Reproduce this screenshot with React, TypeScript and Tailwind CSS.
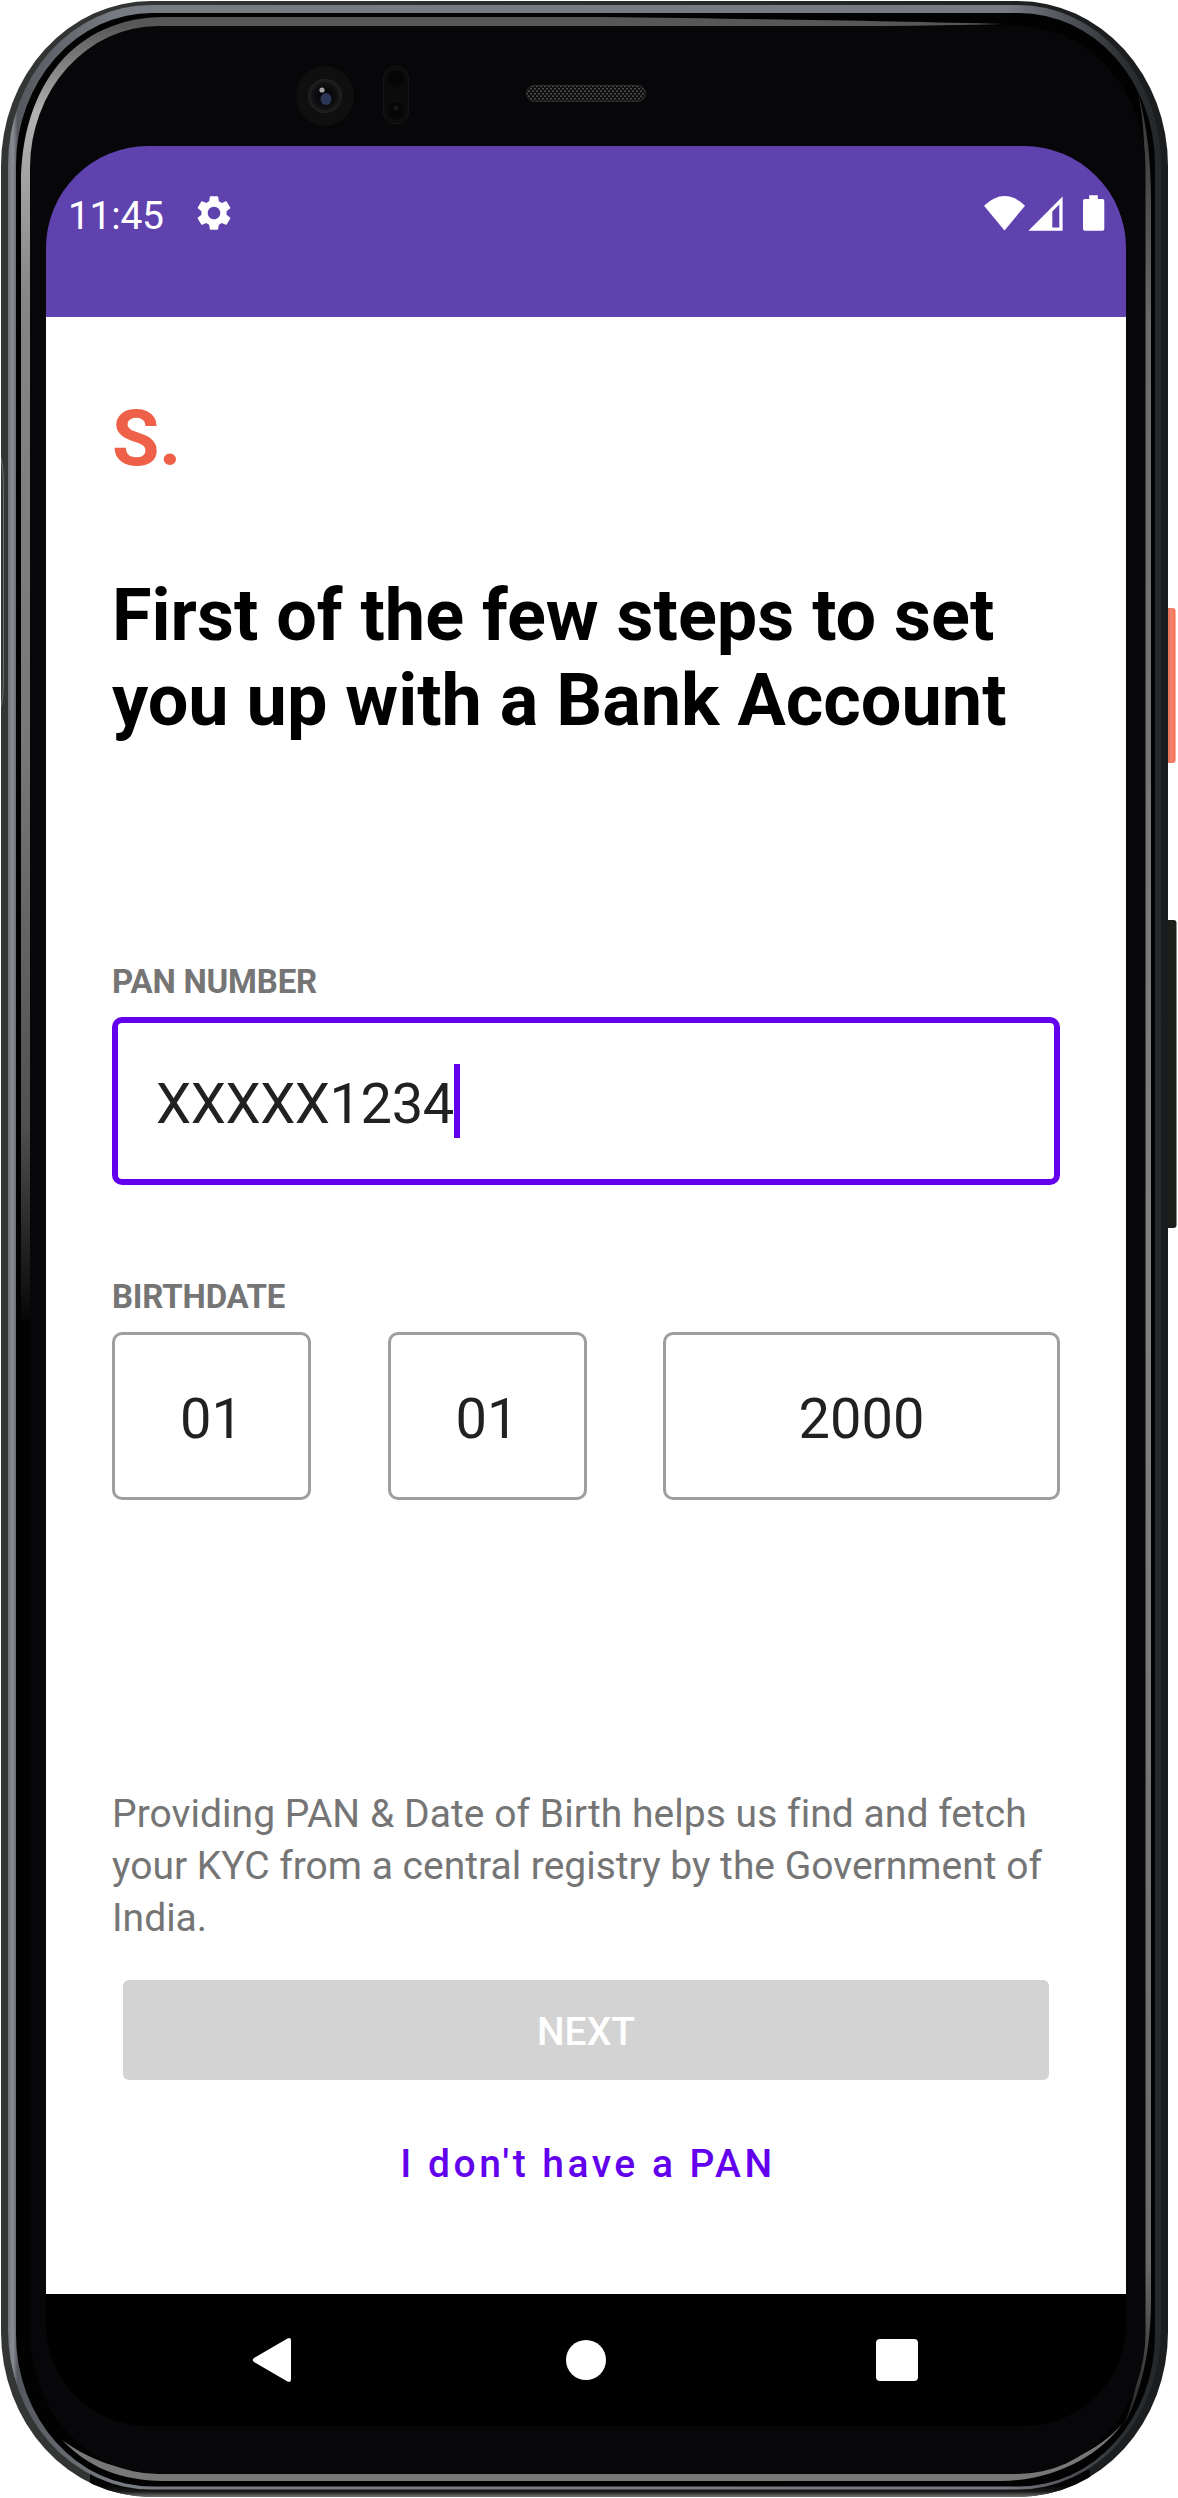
import React from "react";
import { MdSettings } from "react-icons/md";

function PhoneBody() {
  return (
    <svg className="absolute inset-0" width="1178" height="2498" viewBox="0 0 1178 2498" fill="none" aria-hidden="true">
      <defs>
        <clipPath id="bodyClip">
          <rect x="1" y="1" width="1167" height="2496" rx="150" ry="165" />
        </clipPath>
        <linearGradient id="shell" x1="0" y1="0" x2="1170" y2="0" gradientUnits="userSpaceOnUse">
          <stop offset="0" stopColor="#343636" />
          <stop offset="0.5" stopColor="#2b2d2d" />
          <stop offset="1" stopColor="#1b1c1e" />
        </linearGradient>
        <linearGradient id="shellBottom" x1="0" y1="2486" x2="0" y2="2497" gradientUnits="userSpaceOnUse">
          <stop offset="0" stopColor="#050505" />
          <stop offset="0.5" stopColor="#1a1a1a" />
          <stop offset="1" stopColor="#777777" />
        </linearGradient>
        <linearGradient id="silver" x1="0" y1="0" x2="1170" y2="0" gradientUnits="userSpaceOnUse">
          <stop offset="0" stopColor="#6d7177" />
          <stop offset="0.006" stopColor="#6d7177" />
          <stop offset="0.011" stopColor="#8a8d94" />
          <stop offset="0.015" stopColor="#55585e" />
          <stop offset="0.1" stopColor="#777b82" />
          <stop offset="0.86" stopColor="#777a82" />
          <stop offset="0.96" stopColor="#2c2f32" />
          <stop offset="1" stopColor="#222527" />
        </linearGradient>
        <linearGradient id="glint" x1="0" y1="0" x2="0" y2="2498" gradientUnits="userSpaceOnUse">
          <stop offset="0.01" stopColor="#575757" />
          <stop offset="0.045" stopColor="#b2b2b2" />
          <stop offset="0.12" stopColor="#858585" />
          <stop offset="0.3" stopColor="#777777" />
          <stop offset="0.45" stopColor="#505050" />
          <stop offset="0.53" stopColor="#050505" />
        </linearGradient>
        <linearGradient id="rightGlint" x1="0" y1="90" x2="0" y2="2450" gradientUnits="userSpaceOnUse">
          <stop offset="0" stopColor="#333333" />
          <stop offset="0.1" stopColor="#6a6a6a" />
          <stop offset="0.5" stopColor="#808080" />
          <stop offset="0.92" stopColor="#6a6a6a" />
          <stop offset="1" stopColor="#1a1a1a" />
        </linearGradient>
        <linearGradient id="power" x1="1166" y1="0" x2="1176" y2="0" gradientUnits="userSpaceOnUse">
          <stop offset="0" stopColor="#b04a35" />
          <stop offset="0.25" stopColor="#e8735a" />
          <stop offset="0.6" stopColor="#f08670" />
          <stop offset="0.9" stopColor="#ff6a4c" />
        </linearGradient>
        <radialGradient id="lens">
          <stop offset="0.3" stopColor="#06060a" />
          <stop offset="0.7" stopColor="#101012" />
          <stop offset="1" stopColor="#222222" />
        </radialGradient>
        <pattern id="mesh" width="4" height="5" patternUnits="userSpaceOnUse">
          <rect width="4" height="5" fill="#0c0c0c" />
          <circle cx="1" cy="1.2" r="1" fill="#505050" />
          <circle cx="3" cy="3.7" r="1" fill="#505050" />
        </pattern>
      </defs>

      <rect x="1164" y="608" width="11.5" height="155" rx="3" fill="url(#power)" />
      <rect x="1164" y="920" width="12.5" height="308" rx="3" fill="#1d1d1c" />

      <g clipPath="url(#bodyClip)">
        <rect x="1" y="1" width="1167" height="2496" fill="url(#shell)" />
        <rect x="90" y="2470" width="1000" height="27" fill="url(#shellBottom)" />
        <rect x="8" y="5" width="1153" height="2484.500" rx="143" ry="160" fill="url(#silver)" />
        <rect x="16" y="13" width="1139" height="2473.500" rx="136" ry="152" fill="#020203" />
        <path d="M1 458C3.500 470 3.500 480 3.500 500V660C3.500 690 3 700 1 706" stroke="#6d716f" />
      </g>

      <path d="M165 17H600C760 19 900 21 1005 24C900 26.500 800 27 700 27H165C80 32 36 90 36 185L30 1320H21V185C21 85 75 17 165 17Z" fill="url(#glint)" />
      <path d="M1138 92C1147 125 1151 160 1151 200V2300C1151 2370 1132 2410 1124 2425C1138 2390 1144 2350 1144 2300V200C1146 160 1144 120 1138 92Z" fill="url(#rightGlint)" />
      <path d="M62 2440C95 2474 130 2481 170 2481H1000C1055 2481 1100 2455 1122 2424C1095 2455 1050 2473 1000 2473.500H170C130 2473 95 2464 62 2440Z" fill="#777777" />

      <rect x="30" y="26" width="1115.500" height="2448" rx="128" ry="142" fill="#070608" />

      <ellipse cx="325" cy="96" rx="29" ry="30" fill="#0f0f0f" />
      <circle cx="325" cy="96" r="17" fill="url(#lens)" />
      <ellipse cx="326" cy="99" rx="5.500" ry="6" fill="#2b3656" />
      <circle cx="322" cy="90" r="2.600" fill="#a2a2a2" />

      <rect x="383.500" y="66.500" width="25" height="57" rx="12.500" fill="#0b0b0c" stroke="#131314" strokeWidth="1.500" />
      <circle cx="396" cy="79" r="9.500" fill="#060607" stroke="#121213" />
      <circle cx="396" cy="111" r="9.500" fill="#060607" stroke="#121213" />
      <circle cx="396" cy="108" r="2.500" fill="#161617" />

      <rect x="526.500" y="85.500" width="119" height="16" rx="8" fill="url(#mesh)" stroke="#2c2c2c" />
    </svg>
  );
}

function StatusIcons() {
  return (
    <svg className="mt-[8px] shrink-0" width="122" height="38" viewBox="983 194 122 38" fill="#fff" aria-hidden="true">
      <path d="M984 205.700Q1004.500 186.300 1025 205.700L1004.500 230.500Z" />
      <path fillRule="evenodd" d="M1028.400 230.700L1062.600 196.600V230.700ZM1052.300 211.500V227.500H1059.300V204.500Z" />
      <path d="M1089.200 195.300H1097.800V199H1102.500Q1104.300 199 1104.300 201V229Q1104.300 230.800 1102.500 230.800H1085Q1083 230.800 1083 229V201Q1083 199 1085 199H1089.200Z" />
    </svg>
  );
}

function FieldLabel({ children, className }: { children: React.ReactNode; className: string }) {
  return (
    <div className={`text-[33px] font-bold leading-[40px] tracking-[-0.2px] text-[#757575] ${className}`}>{children}</div>
  );
}

function DateBox({ value, className }: { value: string; className: string }) {
  return (
    <div className={`flex h-[168px] items-center justify-center rounded-[10px] border-[3px] border-[#9e9e9e] pt-[6px] text-[56px] leading-none text-[#212121] ${className}`}>
      {value}
    </div>
  );
}

export default function App() {
  return (
    <div className="relative h-[2498px] w-[1178px] overflow-hidden bg-white pl-[46px] pt-[146px] font-['Roboto',sans-serif]">
      <PhoneBody />
      <div className="relative flex h-[2280px] w-[1080px] flex-col overflow-hidden rounded-[102px]">
        <header className="flex h-[171px] shrink-0 items-start bg-[#6042af] pl-[22px] pr-[21px] pt-[40px] text-white">
          <span className="mt-[5px] w-[125px] text-[39px] leading-[50px] tracking-[-0.3px]">11:45</span>
          <MdSettings className="mt-[6px] size-[42px] shrink-0" />
          <span className="grow" />
          <StatusIcons />
        </header>

        <main className="flex grow flex-col bg-white px-[66px] text-black">
          <div className="mt-[77px] text-[77px] font-bold leading-[90px] tracking-[-0.5px] text-[#ef6048]">S.</div>
          <h1 className="mt-[89px] whitespace-nowrap text-[72px] font-bold leading-[85px]">
            First of the few steps to set
            <br />
            you up with a Bank Account
          </h1>

          <FieldLabel className="mt-[219px]">PAN NUMBER</FieldLabel>
          <div className="mt-[15px] flex h-[168px] items-center rounded-[10px] border-[6px] border-[#6200ee] pl-[38px] text-[56px] leading-none text-[#212121]">
            <span className="pt-[6px] tracking-[-0.4px]">XXXXX1234</span>
            <span className="h-[74px] w-[6px] bg-[#6200ee]" />
          </div>

          <FieldLabel className="mt-[92px]">BIRTHDATE</FieldLabel>
          <div className="mt-[15px] flex justify-between">
            <DateBox value="01" className="w-[199px]" />
            <DateBox value="01" className="w-[199px]" />
            <DateBox value="2000" className="w-[397px]" />
          </div>

          <p className="mt-[288px] whitespace-nowrap text-[39px] leading-[52px] text-[#757575]">
            <span className="tracking-[0.05px] [font-variant-ligatures:common-ligatures]">
              Providing PAN &amp; Date of Birth helps us find and fetch
            </span>
            <br />
            your KYC from a central registry by the Government of
            <br />
            India.
          </p>
          <button className="mx-[11px] mt-[36px] flex h-[100px] shrink-0 items-center justify-center rounded-md bg-[#d3d3d3] pt-[4px] text-[39px] font-medium text-white">
            NEXT
          </button>
          <button className="mt-[59px] pl-[4px] text-center text-[39px] font-medium leading-[50px] tracking-[3.5px] text-[#6200ee]">
            I don't have a PAN
          </button>
        </main>

        <nav className="flex h-[132px] shrink-0 items-center justify-between bg-black pl-[206px] pr-[208px]">
          <svg width="40" height="46" viewBox="0 0 40 46" fill="#fff" aria-label="Back">
            <path d="M2 21L35.500 1.500Q39 0 39 3.500V42.500Q39 46 35.500 44.500L2 25Q-.5 23 2 21Z" />
          </svg>
          <span className="ml-1 size-10 rounded-full bg-white" />
          <span className="size-[42px] rounded-[4px] bg-white" />
        </nav>
      </div>
    </div>
  );
}
